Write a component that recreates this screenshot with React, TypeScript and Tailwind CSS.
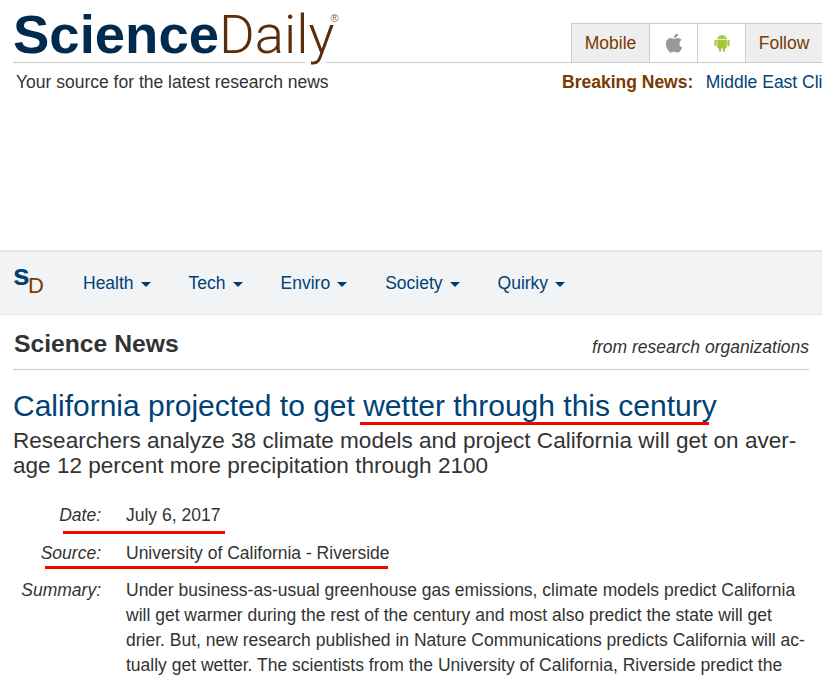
import React from 'react';
import { FaApple } from 'react-icons/fa';
import { AiFillAndroid } from 'react-icons/ai';

const navItems = ['Health', 'Tech', 'Enviro', 'Society', 'Quirky'];

const Caret = () => (
  <span className="ml-[7px] inline-block align-middle border-x-[5px] border-t-[5px] border-x-transparent border-t-[#003d6e]" />
);

const App: React.FC = () => {
  return (
    <div className="h-[681px] w-[822px] overflow-hidden bg-white font-['Liberation_Sans',Arial,sans-serif] text-[17.5px] text-[#333]">
      {/* Masthead */}
      <header className="h-[250px]">
        <div className="flex h-[63px] items-end justify-between">
          <div className="relative ml-[13px] h-[63px] w-[313px]">
            <div className="flex items-baseline whitespace-nowrap pt-[4px] text-[54.5px] leading-[61px]">
              <span className="font-bold text-[#002b4f]">Science</span>
              <span className="font-['Roboto',sans-serif] font-light text-[#5a2c0a]">Daily</span>
              <span className="ml-[-4px] self-start pt-[9px] text-[11px] leading-[11px] text-[#8a6a50]">®</span>
            </div>
            <div className="absolute bottom-0 left-0 h-px w-[292px] bg-[#ccc]" />
          </div>
          <div className="flex h-[63px] flex-1 items-end justify-end border-b border-[#ccc]">
            <div className="flex h-[39px] text-[#7a3a00]">
              <div className="flex w-[79px] items-center justify-center border-x border-t border-[#ccc] bg-[#eee]">Mobile</div>
              <div className="flex w-[48px] items-center justify-center border-r border-t border-[#ccc]">
                <FaApple className="h-[22px] w-[22px] text-[#999]" />
              </div>
              <div className="flex w-[48px] items-center justify-center border-r border-t border-[#ccc]">
                <AiFillAndroid className="h-[20px] w-[20px] text-[#a4c639]" />
              </div>
              <div className="flex w-[76px] items-center justify-center border-t border-[#ccc] bg-[#eee]">Follow</div>
            </div>
          </div>
        </div>
        <div className="flex items-center justify-between pt-[7px] leading-[25px]">
          <div className="pl-[16px]">Your source for the latest research news</div>
          <div className="w-[260px] overflow-hidden whitespace-nowrap">
            <span className="font-bold text-[#7a3a00]">Breaking News:</span>
            <span className="ml-[12.5px] text-[#004276]">Middle East Climate Change</span>
          </div>
        </div>
      </header>

      {/* Nav */}
      <nav className="flex h-[65px] items-center border-y border-t-2 border-[#e3e4e6] bg-[#f1f3f5] text-[#004276]">
        <div className="relative ml-[14px] h-[32px] w-[69px] text-[#004276]">
          <span className="absolute left-[-1px] top-[-8px] text-[30px] font-bold leading-[32px]">s</span>
          <span className="absolute left-[14px] top-[6px] text-[22px] leading-[26px] text-[#7a3a00]">D</span>
        </div>
        <div className="flex gap-[38px]">
          {navItems.map(item => (
            <a key={item} className="whitespace-nowrap">
              {item}
              <Caret />
            </a>
          ))}
        </div>
      </nav>

      <main className="px-[13px]">
        <div className="flex h-[55px] w-[796px] items-center justify-between border-b border-[#ccc] pt-[3px]">
          <h2 className="pl-px text-[24.7px] font-bold leading-[30px]">Science News</h2>
          <span className="pt-[7px] italic">from research organizations</span>
        </div>

        <div className="relative mt-[18px]">
          <h1 className="text-[30px] leading-[36px] text-[#004276]">California projected to get wetter through this century</h1>
          <div className="absolute left-[347px] top-[34px] h-[3px] w-[349px] bg-[#f00]" />
        </div>
        <p className="mt-[4px] text-[22.55px] leading-[25px]">
          Researchers analyze 38 climate models and project California will get on aver-
          <br />
          age 12 percent more precipitation through 2100
        </p>

        <dl className="mt-[25px] grid grid-cols-[88px_1fr] gap-x-[25px] gap-y-[13px] leading-[25px]">
          <dt className="relative text-right italic">
            Date:
            <div className="absolute left-[50px] top-[28px] h-[3px] w-[162px] bg-[#f00]" />
          </dt>
          <dd>July 6, 2017</dd>
          <dt className="relative text-right italic">
            Source:
            <div className="absolute left-[32px] top-[25px] h-[3px] w-[343px] bg-[#f00]" />
          </dt>
          <dd>University of California - Riverside</dd>
          <dt className="-mt-px text-right italic">Summary:</dt>
          <dd className="-mt-px">
            Under business-as-usual greenhouse gas emissions, climate models predict California
            <br />
            will get warmer during the rest of the century and most also predict the state will get
            <br />
            drier. But, new research published in Nature Communications predicts California will ac-
            <br />
            tually get wetter. The scientists from the University of California, Riverside predict the
          </dd>
        </dl>
      </main>
    </div>
  );
};

export default App;
